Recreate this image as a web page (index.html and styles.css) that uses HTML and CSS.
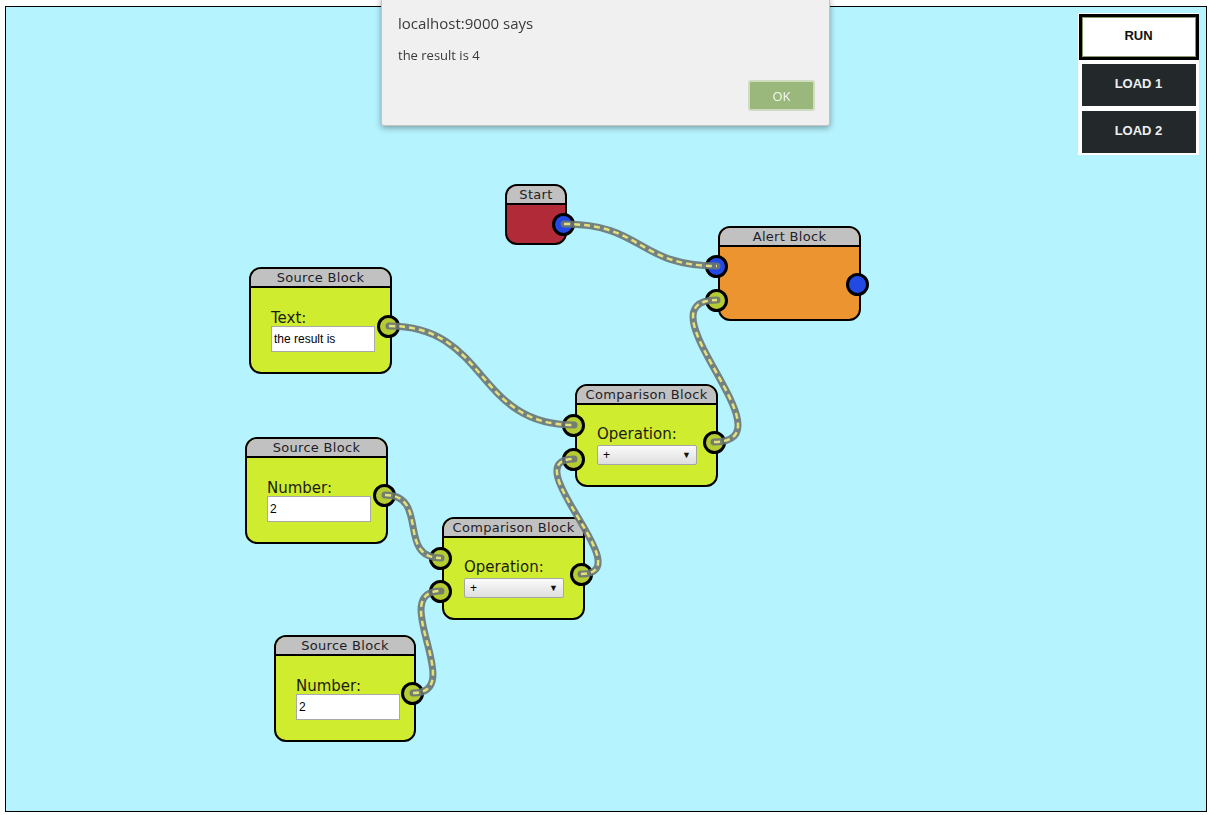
FILE: index.html
```html
<!DOCTYPE html>
<html>
<head>
<meta charset="utf-8">
<title>Blocks</title>
<link rel="stylesheet" href="styles.css">
</head>
<body>
<div class="canvas">
  <div class="node start" style="left:499px;top:177px">
    <div class="node-head">Start</div>
    <div class="node-body"></div>
    <span class="port out exec" style="top:27px"></span>
  </div>

  <div class="node alert" style="left:712px;top:219px">
    <div class="node-head">Alert Block</div>
    <div class="node-body"></div>
    <span class="port in exec" style="top:27px"></span>
    <span class="port in data" style="top:61px"></span>
    <span class="port out exec" style="top:45px"></span>
  </div>

  <div class="node source" style="left:243px;top:260px">
    <div class="node-head">Source Block</div>
    <div class="node-body">
      <label class="field-label">Text:</label>
      <input class="field-input" type="text" value="the result is">
    </div>
    <span class="port out data" style="top:46px"></span>
  </div>

  <div class="node compare" style="left:569px;top:377px">
    <div class="node-head">Comparison Block</div>
    <div class="node-body">
      <label class="field-label">Operation:</label>
      <div class="select"><span>+</span><span class="caret">▼</span></div>
    </div>
    <span class="port in data" style="top:28px"></span>
    <span class="port in data" style="top:62px"></span>
    <span class="port out data" style="top:45px"></span>
  </div>

  <div class="node source" style="left:239px;top:430px">
    <div class="node-head">Source Block</div>
    <div class="node-body">
      <label class="field-label">Number:</label>
      <input class="field-input" type="text" value="2">
    </div>
    <span class="port out data" style="top:45px"></span>
  </div>

  <div class="node compare" style="left:436px;top:510px">
    <div class="node-head">Comparison Block</div>
    <div class="node-body">
      <label class="field-label">Operation:</label>
      <div class="select"><span>+</span><span class="caret">▼</span></div>
    </div>
    <span class="port in data" style="top:28px"></span>
    <span class="port in data" style="top:61px"></span>
    <span class="port out data" style="top:44px"></span>
  </div>

  <div class="node source narrow" style="left:268px;top:628px">
    <div class="node-head">Source Block</div>
    <div class="node-body">
      <label class="field-label">Number:</label>
      <input class="field-input" type="text" value="2">
    </div>
    <span class="port out data" style="top:45px"></span>
  </div>

  <svg class="wires" width="1200" height="804" viewBox="0 0 1200 804">
    <g class="wire">
      <path class="wire-base" d="M558 217 C638 217 631 259 711 259"/>
      <path class="wire-dash" d="M558 217 C638 217 631 259 711 259"/>
    </g>
    <g class="wire">
      <path class="wire-base" d="M708 435 C790 435 629 293 711 293"/>
      <path class="wire-dash" d="M708 435 C790 435 629 293 711 293"/>
    </g>
    <g class="wire">
      <path class="wire-base" d="M383 319 C483 319 468 418 568 418"/>
      <path class="wire-dash" d="M383 319 C483 319 468 418 568 418"/>
    </g>
    <g class="wire">
      <path class="wire-base" d="M575 567 C637 567 506 452 568 452"/>
      <path class="wire-dash" d="M575 567 C637 567 506 452 568 452"/>
    </g>
    <g class="wire">
      <path class="wire-base" d="M379 488 C424 488 390 551 435 551"/>
      <path class="wire-dash" d="M379 488 C424 488 390 551 435 551"/>
    </g>
    <g class="wire">
      <path class="wire-base" d="M407 686 C462 686 380 584 435 584"/>
      <path class="wire-dash" d="M407 686 C462 686 380 584 435 584"/>
    </g>
  </svg>

  <div class="controls">
    <button class="btn run">RUN</button>
    <button class="btn load">LOAD 1</button>
    <button class="btn load">LOAD 2</button>
  </div>
</div>

<div class="dialog">
  <div class="dialog-title">localhost:9000 says</div>
  <div class="dialog-msg">the result is 4</div>
  <div class="dialog-actions"><button class="dialog-ok">OK</button></div>
</div>
</body>
</html>
```
FILE: styles.css
```css
html, body {
  margin: 0;
  padding: 0;
  background: #ffffff;
}

body {
  font-family: "DejaVu Sans", sans-serif;
}

.canvas {
  position: relative;
  margin: 6px 0 0 5px;
  width: 1200px;
  height: 804px;
  border: 1px solid #000;
  background: #b5f3fe;
  overflow: hidden;
}

.node {
  position: absolute;
  box-sizing: border-box;
  width: 143px;
  border: 2px solid #000;
  border-radius: 12px;
  display: flex;
  flex-direction: column;
}

.node.source { height: 107px; background: #d0ec2e; }
.node.source.narrow { width: 142px; }
.node.compare { height: 103px; background: #d0ec2e; }
.node.alert { height: 95px; background: #ec9530; }
.node.start { width: 62px; height: 61px; background: #b02a38; }

.node-head {
  height: 17px;
  line-height: 18px;
  font-size: 13px;
  letter-spacing: 0.3px;
  color: #1e1e28;
  text-align: center;
  background: #c1c1c1;
  border-bottom: 2px solid #000;
  border-radius: 10px 10px 0 0;
  white-space: nowrap;
}

.node-body {
  flex: 1;
  display: flex;
  flex-direction: column;
  align-items: flex-start;
  padding: 21px 0 0 20px;
}

.node.compare .node-body { padding-top: 20px; }

.field-label {
  font-size: 15px;
  line-height: 18px;
  height: 17px;
  color: #1c1c10;
}

.field-input {
  box-sizing: border-box;
  width: 104px;
  height: 26px;
  margin: 0;
  padding: 0 2px;
  border: 1px solid #a9a9a9;
  background: #fff;
  font-family: "Liberation Sans", Arial, sans-serif;
  font-size: 12px;
  color: #000;
  outline: none;
}

.select {
  box-sizing: border-box;
  width: 100px;
  height: 20px;
  margin-top: 3px;
  padding: 0 5px 0 5px;
  display: flex;
  align-items: center;
  justify-content: space-between;
  border: 1px solid #a6a6a6;
  border-radius: 2px;
  background: linear-gradient(#fbfbfb, #dedede);
  font-family: "Liberation Sans", Arial, sans-serif;
  font-size: 12px;
  color: #000;
}

.select .caret {
  font-size: 9px;
  color: #111;
}

.port {
  position: absolute;
  box-sizing: border-box;
  width: 23px;
  height: 23px;
  border: 3px solid #000;
  border-radius: 50%;
  z-index: 2;
}

.port.in { left: -15px; }
.port.out { right: -10px; }
.port.exec { background: #2349e4; }
.port.data { background: #b6cc33; }

.wires {
  position: absolute;
  left: 0;
  top: 0;
  z-index: 5;
  pointer-events: none;
}

.wire-base {
  fill: none;
  stroke: #6a7674;
  stroke-opacity: 0.9;
  stroke-width: 7;
  stroke-linecap: round;
}

.wire-dash {
  fill: none;
  stroke: #e4e07c;
  stroke-width: 2.5;
  stroke-dasharray: 6 4;
}

.controls {
  position: absolute;
  left: 1072px;
  top: 6px;
  width: 121px;
  box-sizing: border-box;
  padding: 1px 0 2px;
  background: #fff;
  display: flex;
  flex-direction: column;
  align-items: center;
  z-index: 6;
}

.btn {
  font-family: "Liberation Sans", Arial, sans-serif;
  font-weight: bold;
  font-size: 13px;
  cursor: pointer;
  box-sizing: border-box;
  margin: 0;
  padding: 0 0 3px;
}

.btn.run {
  width: 120px;
  height: 46px;
  background: #fff;
  color: #111;
  border: 3px solid #000;
  box-shadow: 0 0 0 1px #8a9a6a inset;
  margin-bottom: 4px;
}

.btn.load {
  width: 114px;
  height: 42px;
  background: #23292b;
  color: #eef0f0;
  border: none;
}

.btn.load + .btn.load { margin-top: 5px; }

.dialog {
  position: fixed;
  left: 381px;
  top: -2px;
  width: 449px;
  height: 128px;
  box-sizing: border-box;
  background: #f0f0f0;
  border: 1px solid #c4c4c4;
  border-radius: 0 0 3px 3px;
  box-shadow: 0 2px 6px rgba(0, 0, 0, 0.35);
  font-family: "Open Sans", sans-serif;
  color: #3a3a3a;
  padding: 13px 14px 0 16px;
  display: flex;
  flex-direction: column;
  z-index: 10;
}

.dialog-title {
  font-size: 15px;
  line-height: 22px;
}

.dialog-msg {
  font-size: 13px;
  line-height: 18px;
  margin-top: 12px;
}

.dialog-actions {
  display: flex;
  justify-content: flex-end;
  margin-top: 16px;
}

.dialog-ok {
  width: 67px;
  height: 31px;
  margin: 0;
  box-sizing: border-box;
  background: #9ab87b;
  border: 2px solid #cfdcc2;
  border-radius: 3px;
  color: #f5f8f0;
  font-family: "Open Sans", sans-serif;
  font-size: 13px;
}
```
